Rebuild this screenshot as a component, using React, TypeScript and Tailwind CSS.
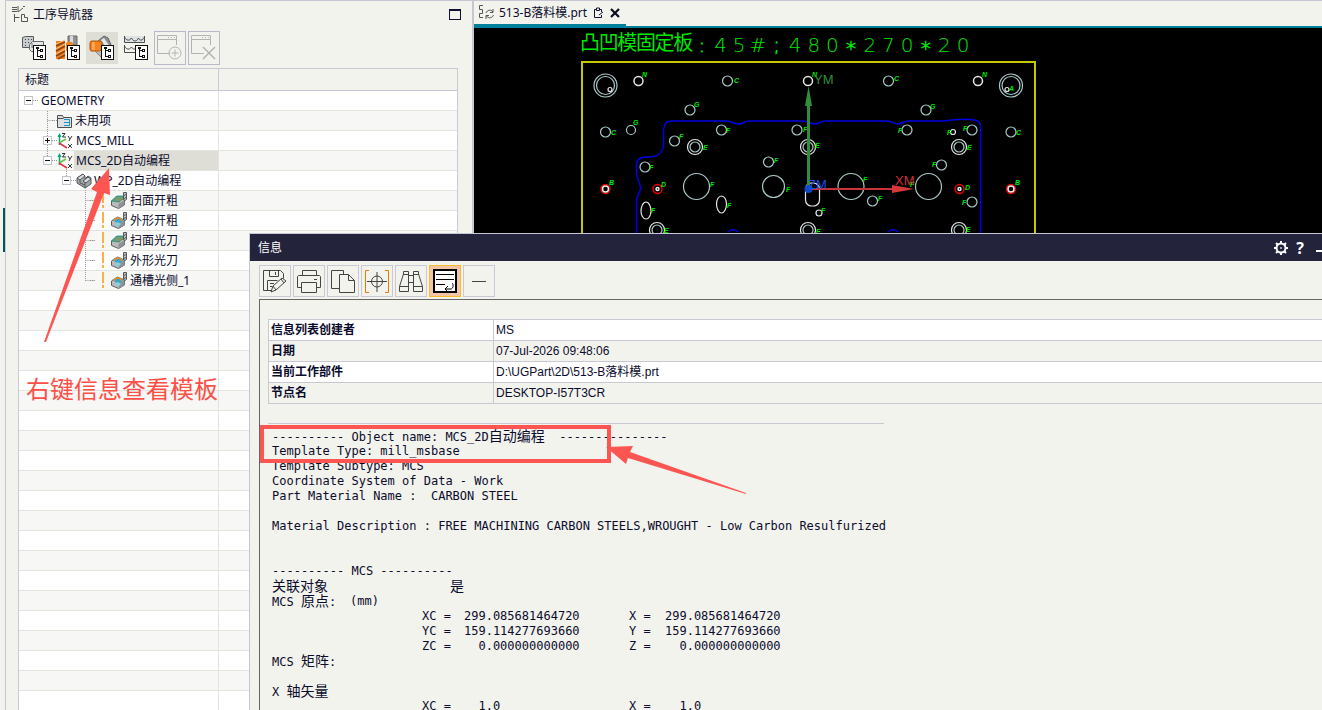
import { ReactNode } from 'react'

const yahei = "font-['Noto_Sans','Noto_Sans_CJK_SC',sans-serif]"

// ---------- navigator data ----------

type Node = {
  label: string
  icon: 'none' | 'folder' | 'mcs' | 'part' | 'face' | 'contour'
  depth: number
  toggle?: '+' | '-'
  selected?: boolean
}

const nodes: Node[] = [
  { label: 'GEOMETRY', icon: 'none', depth: 0, toggle: '-' },
  { label: '未用项', icon: 'folder', depth: 1 },
  { label: 'MCS_MILL', icon: 'mcs', depth: 1, toggle: '+' },
  { label: 'MCS_2D自动编程', icon: 'mcs', depth: 1, toggle: '-', selected: true },
  { label: 'WP_2D自动编程', icon: 'part', depth: 2, toggle: '-' },
  { label: '扫面开粗', icon: 'face', depth: 3 },
  { label: '外形开粗', icon: 'contour', depth: 3 },
  { label: '扫面光刀', icon: 'face', depth: 3 },
  { label: '外形光刀', icon: 'contour', depth: 3 },
  { label: '通槽光侧_1', icon: 'contour', depth: 3 },
]

const indents = ['pl-[5px]', 'pl-6', 'pl-[43px]', 'pl-[62px]']
const emptyRows = Array.from({ length: 22 })

// ---------- icons ----------

function TreeBadge({ x, y }: { x: number; y: number }) {
  return (
    <g transform={`translate(${x} ${y})`} fill="#fff" stroke="#111" shapeRendering="crispEdges">
      <rect x=".5" y=".5" width="12" height="14" />
      <path d="M4.5 3v8.5h3M4.5 5.5h3" fill="none" />
      <rect x="7.5" y="4.5" width="2" height="2" />
      <rect x="7.5" y="10.5" width="2" height="2" />
      <rect x="3.5" y="2.5" width="2" height="1" />
    </g>
  )
}

function ProgramIcon() {
  return (
    <svg width="26" height="26" viewBox="0 0 26 26">
      <path d="M1.500 2.500l3-1h8v10l-3 1h-8z" fill="#c9cccf" stroke="#55595c" />
      <path d="M4 4.500h1M7 4.500h1M10 4.500h1M4 7.500h1M7 7.500h1M4 10.500h1" stroke="#444" />
      <path d="M8.500 9.500l3-3h11v10h-12l-2-2z" fill="#e4e6e8" stroke="#66696c" />
      <path d="M11 12h2M11 8v5" stroke="#777" />
      <TreeBadge x={12} y={10} />
    </svg>
  )
}

function ToolIcon() {
  return (
    <svg width="26" height="26" viewBox="0 0 26 26">
      <path d="M13 1h9v9h-9z" fill="#8f9396" stroke="#66696b" />
      <path d="M15 1h3v9h-3z" fill="#d7dadb" />
      <path d="M11 8c3-2 5-1 7 0v8h-7z" fill="#f58220" />
      <path d="M1 6h9v18l-9 0z" fill="#f47d1c" />
      <path d="M1 11l9-4M1 16l9-5M1 21l9-5M3 24l7-4" stroke="#8a4410" strokeWidth="1.5" />
      <path d="M1 9l9-4M1 14l9-5M1 19l9-5" stroke="#ffc07d" />
      <TreeBadge x={12} y={10} />
    </svg>
  )
}

function GeometryIcon() {
  return (
    <svg width="26" height="26" viewBox="0 0 26 26">
      <path d="M9 6l6-5 4 2 4 9-6 5-7-2z" fill="#8d9092" stroke="#5d6062" />
      <path d="M15 3l6 9-3 2-6-9z" fill="#e4e6e7" />
      <path d="M5 15l8 8v-8z" fill="#b8babb" stroke="#888" />
      <path d="M2 6h8l3 1v8l-3 1H2L1 14V8z" fill="#f58220" stroke="#b55709" />
      <path d="M3 7h3v8H3z" fill="#ffa64d" />
      <TreeBadge x={12} y={10} />
    </svg>
  )
}

function MethodIcon() {
  return (
    <svg width="26" height="26" viewBox="0 0 26 26" fill="none" stroke="#4b4e50">
      <path d="M1.500 1v6.500h20V1M1.500 2c2 4 5 4 7 1 2 4 5 4 7 0 1 3 4 3 6-1" fill="#dfe1e2" />
      <path d="M1.500 10v7.500h11M1.500 11c2 4 5 4 7 1 1 2 3 3 5 1M14 11.500h8" />
      <TreeBadge x={12} y={10} />
    </svg>
  )
}

function WindowIcon({ kind }: { kind: 'add' | 'remove' }) {
  return (
    <svg width="28" height="28" viewBox="0 0 28 28" fill="none" stroke="#b3b3b3">
      <path d="M14 19.500H1.500V1.500h19V11M1.500 5.500h19" />
      <path d="M12 3.500h1M15 3.500h1M18 3.500h1" />
      {kind === 'add' ? (
        <>
          <circle cx="19" cy="19" r="6" />
          <path d="M15.500 19h7M19 15.500v7" />
        </>
      ) : (
        <path d="M13 13l12 12M25 13L13 25" strokeWidth="1.500" />
      )}
    </svg>
  )
}

function NavigatorIcon() {
  return (
    <svg width="17" height="17" viewBox="0 0 17 17" fill="none" stroke="#555">
      <path d="M0 1.500h5M0 3.500h5M0 5.500h5" />
      <path d="M6 0v6l5-4M11 .5h2" />
      <path d="M2.500 8v8M2.500 11.500h5M9.500 8.500h3v3h3v4h-6z" />
    </svg>
  )
}

function FolderIcon() {
  return (
    <svg width="16" height="16" viewBox="0 0 16 16" fill="none" stroke="#4c4f52">
      <path d="M.5 14.500v-12h5l1 2h8v10z" fill="#dedfe0" />
      <path d="M.5 5.500h6" />
      <path d="M7 6.500h5.500v6H7M7 9.500h5" stroke="#1696c4" />
    </svg>
  )
}

function McsIcon() {
  return (
    <svg width="17" height="18" viewBox="0 0 17 18" fill="none">
      <path d="M2.500 3v10" stroke="#00a67c" strokeWidth="1.500" />
      <path d="M.5 5l2-4 2 4z" fill="#00a67c" />
      <path d="M2 11l7-4" stroke="#65c443" strokeWidth="1.500" />
      <path d="M2 11l8 5" stroke="#e8304a" strokeWidth="1.500" />
      <path d="M5 1.500h3L5.500 5H9M11 4l2 3 2-3M13 7l-1 2M11 12l4 4M15 12l-4 4" stroke="#333" />
    </svg>
  )
}

function PartIcon() {
  return (
    <svg width="16" height="16" viewBox="0 0 16 16" stroke="#55585a" strokeLinejoin="round">
      <path d="M1 5l6-4 2 2v3l3-3 3 2v6l-6 4-8-5z" fill="#a4a7a9" />
      <path d="M1 5l6-4 2 2-5 4z" fill="#d7d9da" />
      <path d="M7 8l5-4 3 2-5 4z" fill="#d7d9da" />
      <path d="M4 7v3l5 2V9M9 12v3" fill="none" />
    </svg>
  )
}

function OperationIcon({ kind }: { kind: 'face' | 'contour' }) {
  return (
    <svg width="17" height="17" viewBox="0 0 17 17">
      <path d="M.5 9l6-4 7 3v5l-6 3.500-7-3z" fill="#b9bbbc" stroke="#5c5f61" />
      <path d="M7.500 12l6-4v5l-6 3.500z" fill="#8f9294" />
      {kind === 'face' ? (
        <>
          <path d="M.5 9l5-5h8l-5 6z" fill="#35a896" stroke="#2c7f72" strokeWidth=".7" />
          <path d="M3 8h8M5 6h7" stroke="#e08a2e" strokeWidth=".8" />
        </>
      ) : (
        <>
          <path d="M1 8l5-3 7 3-5 4z" fill="#37a6cc" />
          <path d="M3 9c1-4 7-4 8 0" fill="none" stroke="#f08a24" strokeWidth="1.500" />
          <path d="M4 12l3-2 3 2-3 3z" fill="#8cd0df" />
        </>
      )}
      <path d="M12.500.5h3v7l-1.500 1-1.500-1z" fill="#bfc1c3" stroke="#55585a" />
      <path d="M12 4l4-2M12 7l4-2" stroke="#55585a" />
    </svg>
  )
}

// ---------- tree ----------

function Toggle({ sign }: { sign: '+' | '-' }) {
  return (
    <button aria-label={sign === '+' ? 'expand' : 'collapse'} className="relative z-10 size-[9px] shrink-0 border border-[#c4c4cf] bg-white">
      <svg className="size-[7px]" viewBox="0 0 7 7" stroke="#111" shapeRendering="crispEdges">
        <path d={sign === '+' ? 'M1 3.500h5M3.500 1v5' : 'M1 3.500h5'} />
      </svg>
    </button>
  )
}

function NodeIcon({ icon }: { icon: Node['icon'] }) {
  if (icon === 'folder') return <FolderIcon />
  if (icon === 'mcs') return <McsIcon />
  if (icon === 'part') return <PartIcon />
  if (icon === 'face' || icon === 'contour') return <OperationIcon kind={icon} />
  return null
}

function TreeRow({ node }: { node: Node }) {
  return (
    <li className="grid h-5 grid-cols-[200px_1fr] border-b border-[#e4e4df] odd:bg-white even:bg-[#f7f7f5]">
      <div className={`flex min-w-0 items-center border-r border-[#e4e4df] ${indents[node.depth]}`}>
        {node.toggle ? <Toggle sign={node.toggle} /> : <span className="w-[9px] shrink-0" />}
        <span className="w-[5px] shrink-0 border-t border-dotted border-[#999]" />
        {node.depth === 3 && (
          <svg width="16" height="19" viewBox="0 0 16 19" className="shrink-0">
            <path d="M8 1v11M8 14v3" stroke="#f9b04b" strokeWidth="2" />
          </svg>
        )}
        <NodeIcon icon={node.icon} />
        <span className={`flex h-full items-center text-[12px] whitespace-nowrap ${node.icon === 'none' ? 'pl-[3px]' : 'pl-0.5'} ${node.selected ? 'flex-1 bg-[#deddd6]' : ''}`}>
          {node.label}
        </span>
      </div>
    </li>
  )
}

function ToolbarButton({ label, active, children }: { label: string; active?: boolean; children: ReactNode }) {
  return (
    <button aria-label={label} className={`grid h-8 w-8 place-items-center ${active ? 'bg-[#deddd6]' : ''}`}>
      {children}
    </button>
  )
}

function Navigator() {
  return (
    <section className="flex w-[467px] shrink-0 flex-col border-l border-[#c6c6d4]">
      <header className="flex h-7 shrink-0 items-center gap-1 border-t border-[#c6c6d4] pr-[11px] pl-1.5">
        <NavigatorIcon />
        <h1 className="flex-1 text-[12px]">工序导航器</h1>
        <button aria-label="maximize" className="h-[11px] w-3 border border-t-2 border-[#111133]" />
      </header>
      <div className="flex h-10 shrink-0 items-center gap-0.5 pl-3">
        <ToolbarButton label="program order"><ProgramIcon /></ToolbarButton>
        <ToolbarButton label="machine tool"><ToolIcon /></ToolbarButton>
        <ToolbarButton label="geometry" active><GeometryIcon /></ToolbarButton>
        <ToolbarButton label="method"><MethodIcon /></ToolbarButton>
        <button disabled aria-label="create" className="grid h-[34px] w-8 place-items-center border border-[#b9b9cb]"><WindowIcon kind="add" /></button>
        <button disabled aria-label="delete" className="grid h-[34px] w-8 place-items-center border border-[#b9b9cb]"><WindowIcon kind="remove" /></button>
      </div>
      <div className="relative mr-3.5 ml-3 flex-1 overflow-hidden border border-b-0 border-[#c9c9d5]">
        <div className="grid h-[22px] grid-cols-[200px_1fr] border-b border-[#c9c9d5]">
          <div className="flex items-center border-r border-[#c9c9d5] pl-1.5 text-[12px]">标题</div>
        </div>
        <ul>
          {nodes.map((n) => <TreeRow key={n.label} node={n} />)}
          {emptyRows.map((_, i) => (
            <li key={i} className="grid h-5 grid-cols-[200px_1fr] border-b border-[#e4e4df] odd:bg-white even:bg-[#f7f7f5]">
              <div className="border-r border-[#e4e4df]" />
            </li>
          ))}
        </ul>
        {/* dotted connectors between parents and children */}
        <svg className="pointer-events-none absolute top-0 left-0" width="100" height="220" stroke="#999" strokeDasharray="1 1" fill="none">
          <path d="M28.500 42v46M28.500 51.500h8M47.500 100v9M66.500 121v91M66.500 131.500h9M66.500 151.500h9M66.500 171.500h9M66.500 191.500h9M66.500 211.500h9" />
        </svg>
      </div>
    </section>
  )
}

// ---------- drawing ----------

const holes = [
  [727.5, 81, 5], [888.5, 81, 5],
  [690, 110, 5], [926, 110, 5], [605.5, 132, 5], [631, 130, 4.5], [1011, 132, 5],
  [721.5, 130, 5], [674.5, 141, 5], [797, 130, 5], [907, 130, 5], [972, 130, 5],
  [645, 167, 5], [768.5, 162, 5], [941.5, 165, 5], [872.5, 201, 5], [972, 202, 5],
  [696.5, 186.5, 13], [773.5, 186.5, 11], [851, 186.5, 13], [928.5, 186.5, 13],
]
const bushings = [[695, 147], [808, 147], [959, 147], [657, 230], [808, 230], [959, 230]]
const pins = [[605.5, 189], [657.5, 189], [959.5, 189], [1011, 189]]

const marks: [string, number, number][] = [
  ['N', 642, 77], ['C', 734, 83], ['N', 812, 77], ['C', 894, 81], ['N', 982, 77],
  ['G', 694, 107], ['G', 930, 109], ['C', 611, 135], ['G', 633, 125], ['C', 1016, 135],
  ['F', 726, 133], ['F', 679, 139], ['F', 803, 132], ['F', 898, 133], ['F', 947, 135], ['F', 963, 131],
  ['E', 703, 150], ['E', 815, 148], ['E', 967, 150], ['F', 649, 170], ['F', 774, 163], ['F', 932, 167],
  ['F', 710, 187], ['F', 786, 192], ['F', 863, 182], ['F', 910, 187], ['B', 609, 185], ['D', 661, 187],
  ['D', 965, 190], ['B', 1015, 185], ['F', 651, 213], ['F', 727, 208], ['F', 878, 201], ['F', 821, 213],
  ['F', 962, 205], ['E', 664, 233], ['E', 816, 234], ['E', 966, 232], ['A', 1009, 91],
]

const caption = [...'凸凹模固定板:45#;480*270*20']

function Drawing() {
  return (
    <svg width="848" height="206" viewBox="474 28 848 206" fill="none" className="block">
      {/* stroke-font caption, one glyph per cell */}
      <text fill="#00e800" fontSize="20" fontWeight="300" textAnchor="middle" fontFamily="'DejaVu Sans Light', 'DejaVu Sans', 'Noto Sans CJK SC', sans-serif">
        {caption.map((c, i) => (
          <tspan
            key={i}
            x={590 + i * 18.65}
            y={c === '*' ? 55 : i < 6 ? 50 : 52}
            fontWeight={i < 6 ? 400 : c === '*' || c === ':' || c === ';' ? 700 : 200}
          >
            {c}
          </tspan>
        ))}
      </text>
      <path d="M582 240V62h453v178" stroke="#c8c800" strokeWidth="2" />
      <path
        d="M636.5 240v-40c0-5 5-8 4-13s-4-10-4-15v-8c1-6 5-7 12-7 10 0 14-4 15-12v-15c1-6 2-9 8-9h55c5 0 7 3 12 3s6-3 11-3h53c5 0 7 3 12 3s6-3 11-3h62c5 0 6 3 10 3s7-3 11-3h35c15-2 25-2 31-1 5 1 6 3 6 8V240M728 232c3-3 7-3 10 0M888 232c3-3 7-3 10 0"
        stroke="#0000e6"
        strokeWidth="1.5"
      />
      <g stroke="#a9c8c8" strokeWidth="1.2">
        {holes.map(([x, y, r]) => <circle key={`${x},${y}`} cx={x} cy={y} r={r} />)}
      </g>
      <g stroke="#e6e6e6" strokeWidth="1.2">
        {[605.5, 1011].map((x) => (
          <g key={x} stroke="#a9c8c8">
            <circle cx={x} cy="85.5" r="11.5" />
            <circle cx={x} cy="85.5" r="9" />
          </g>
        ))}
        {[638.5, 808, 978].map((x) => <circle key={x} cx={x} cy="81" r="4.500" strokeWidth="1.500" />)}
        <circle cx="610" cy="89.5" r="2" />
        <circle cx="1007" cy="89.5" r="2" />
        <circle cx="953" cy="132" r="2.5" />
        <circle cx="819" cy="213" r="3" />
        {bushings.map(([x, y]) => (
          <g key={`${x},${y}`}>
            <circle cx={x} cy={y} r="7.5" />
            <circle cx={x} cy={y} r="5" stroke="#a9c8c8" />
          </g>
        ))}
        <path d="M646 202c3 0 5 5 5 9s-2 8-5 8-5-4-5-8 2-9 5-9zM721.5 196c3 0 5 4 5 8s-2 9-5 9-5-5-5-9 2-8 5-8z" />
        <rect x="805.5" y="183" width="14" height="23" rx="6" />
      </g>
      {pins.map(([x, y]) => (
        <g key={x}>
          <circle cx={x} cy={y} r="4.5" stroke="#e60000" strokeWidth="1.5" />
          <circle cx={x} cy={y} r={x > 650 && x < 1000 ? 1.5 : 3} stroke="#eee" strokeWidth="1.5" />
        </g>
      ))}
      <g fill="#00e800" fontSize="7" fontWeight="bold" fontStyle="italic" fontFamily="'Liberation Sans', sans-serif">
        {marks.map(([t, x, y]) => <text key={`${x},${y}`} x={x} y={y}>{t}</text>)}
      </g>
      <path d="M808.500 189V104" stroke="#2f8f3a" strokeWidth="3" />
      <path d="M805 106l3.500-20 3.500 20z" fill="#2f8f3a" />
      <path d="M809 189h84" stroke="#c8323a" strokeWidth="2" />
      <path d="M892 185l22 4-22 4z" fill="#d8383c" />
      <circle cx="808.500" cy="189" r="4" fill="#0f48c8" />
      <g fontSize="13" fontFamily="'Liberation Sans', sans-serif">
        <text x="814" y="84" fill="#2f8f3a">YM</text>
        <text x="895" y="185" fill="#c8323a">XM</text>
        <text x="808" y="189" fill="#1250e0">ZM</text>
      </g>
    </svg>
  )
}

function Viewport() {
  return (
    <main className="flex min-w-0 flex-1 flex-col overflow-hidden border-l-2 border-[#c6c6d4] bg-black">
      <div className="flex h-7 shrink-0 items-start border-t border-b-2 border-t-[#c6c6d4] border-b-[#00809a] bg-[#f3f3ee]">
        <div className="flex h-[25px] items-center gap-1 border-b-2 border-[#00809a] pr-1.5 pl-1">
          <svg width="17" height="17" viewBox="0 0 17 17" fill="none" stroke="#555">
            <path d="M5 1.500H1.500v4h3v4h-3v4H5" />
            <path d="M8 9c1-3 5-4 7-1M15 5v3.500h-3M15.500 11c-1 3-5 4-7 1M8 15v-3.500h3" />
          </svg>
          <span className="text-[12px] whitespace-nowrap">513-B落料模.prt</span>
          <svg width="11" height="12" viewBox="0 0 11 12" fill="none" stroke="#111133" className="ml-0.5">
            <path d="M3 2.500H1.500v8h7V8M7 2.500h1.500V5M3.500 1v2.500h3V1zM6 8l4-3" />
          </svg>
          <button aria-label="close tab" className="ml-0.5">
            <svg width="10" height="10" viewBox="0 0 10 10" stroke="#0b0b22" strokeWidth="2.2"><path d="M1 1l8 8M9 1L1 9" /></svg>
          </button>
        </div>
      </div>
      <Drawing />
    </main>
  )
}

// ---------- information window ----------

const facts = [
  ['信息列表创建者', 'MS'],
  ['日期', '07-Jul-2026 09:48:06'],
  ['当前工作部件', 'D:\\UGPart\\2D\\513-B落料模.prt'],
  ['节点名', 'DESKTOP-I57T3CR'],
]

const tools: { label: string; art: ReactNode; active?: boolean }[] = [
  {
    label: 'save',
    art: (
      <>
        <path d="M10 22.500H1.500v-20h17l3 3v5M7.500 3v5.500h9V3M13.500 4v3M5.500 22V12.500h10M8 15.500h4M8 18.500h2" />
        <path d="M9 24l2-6 9-8 4 3-10 9zM11 18l3 4M19 11l3 4" />
      </>
    ),
  },
  { label: 'print', art: <path d="M6.5 7V2.500h14V7M5.500 19.500h-4V8.500l1-1h21l1 1v11h-4M5.500 14.500h15v10h-15zM18 11.500h3" /> },
  { label: 'copy', art: <path d="M9 20.500H1.500v-18h12V6M9.500 6.500h9l6 6v12h-15zM18.500 6.500v6h6" /> },
  {
    label: 'locate',
    art: (
      <>
        <path d="M5 2.500H1.500v22H5M21 2.500h3.500v22H21" stroke="#f07800" />
        <circle cx="13" cy="13.500" r="5.500" />
        <path d="M3 13.500h20M13 4v20" />
      </>
    ),
  },
  { label: 'find', art: <path d="M5.500 6V3.500h5v20h-9v-5l4-12.500zM15.500 3.500h5V6l4 12.500v5h-9zM5.500 6.500h5M15.500 6.500h5M1.500 18.500h9M15.500 18.500h9M10.500 7.500h5M10.500 14.500h5" /> },
  {
    label: 'wrap',
    active: true,
    art: (
      <>
        <rect x="2" y="2" width="22" height="22" fill="#fff" stroke="#000" strokeWidth="2" />
        <path d="M4 6.500h18M4 11.500h18M4 16.500h9M20 15c2 1 1 6-1 6h-5M16 18l-3 3 3 3" stroke="#000" />
      </>
    ),
  },
  { label: 'collapse', art: <path d="M6 13.500h14" /> },
]

// Chinese glyphs are set a little larger than the latin ones in listings
function Han({ children }: { children: ReactNode }) {
  return <span className="text-[14px]">{children}</span>
}

function Coordinates({ rows }: { rows: [string, string][] }) {
  return (
    <>
      {rows.map(([axis, value]) => (
        <div key={axis} className="grid grid-cols-[28px_130px_49px_28px_122px] pl-[150px]">
          <span>{axis}C =</span>
          <span className="pl-[14px]">{value}</span>
          <span />
          <span>{axis} =</span>
          <span className="pl-2">{value}</span>
        </div>
      ))}
    </>
  )
}

function InfoWindow() {
  return (
    <section className="absolute top-[233px] right-0 bottom-0 left-[249px] flex flex-col overflow-hidden border-t border-l border-[#c6c6d4] bg-[#f3f3ee]">
      <header className="flex h-[27px] shrink-0 items-center gap-2 bg-[#23233c] pl-2 text-white">
        <h2 className="flex-1 text-[12px]">信息</h2>
        <button aria-label="settings">
          <svg width="14" height="14" viewBox="0 0 14 14" fill="none" stroke="#fff" strokeWidth="2">
            <circle cx="7" cy="7" r="4.500" />
            <path d="M7 0v2M7 12v2M0 7h2M12 7h2M2 2l1.500 1.500M10.500 10.500L12 12M12 2l-1.500 1.500M3.500 10.500L2 12" />
            <circle cx="7" cy="7" r=".5" strokeWidth="1" />
          </svg>
        </button>
        <button aria-label="help" className="text-[16px] leading-none font-bold">?</button>
        <button aria-label="minimize" className="ml-1 h-2 w-1.5 border-b-2 border-white" />
      </header>
      <div className="flex shrink-0 gap-0.5 pt-1 pb-0.5 pl-[9px]">
        {tools.map((t) => (
          <button key={t.label} aria-label={t.label} className={`grid size-8 place-items-center border ${t.active ? 'border-[#fbb92c] bg-[#f3c6a5]' : 'border-[#c9c9d5]'}`}>
            <svg width="26" height="26" viewBox="0 0 26 26" fill="none" stroke="#444">{t.art}</svg>
          </button>
        ))}
      </div>
      <div className="ml-[9px] flex-1 overflow-hidden border-t border-l border-[#666]">
        <table className="mt-[19px] ml-2 w-full border-collapse text-[12px]">
          <tbody>
            {facts.map(([name, value]) => (
              <tr key={name} className="h-[21px] border border-[#c9c9d5] odd:bg-white">
                <th scope="row" className="w-[225px] border-r border-[#c9c9d5] p-0 pl-0.5 text-left leading-5 font-bold">{name}</th>
                <td className="p-0 pl-0.5 font-['Liberation_Sans','Noto_Sans_CJK_SC',sans-serif] leading-5">{value}</td>
              </tr>
            ))}
          </tbody>
        </table>
        <hr className="mt-[19px] ml-2 w-[616px] border-[#c9c9d5]" />
        <div className="mt-[5px] ml-3 font-['DejaVu_Sans_Mono','Noto_Sans_CJK_SC',monospace] text-[12px] leading-[15px] whitespace-pre">
          <p className="h-[15px]">---------- Object name: MCS_2D<Han>自动编程</Han>  ---------------</p>
          <p className="h-[15px]">Template Type: mill_msbase</p>
          <p className="h-[15px]">Template Subtype: MCS</p>
          <p className="h-[15px]">Coordinate System of Data - Work</p>
          <p className="h-[15px]">Part Material Name :  CARBON STEEL</p>
          <p className="mt-[15px] h-[15px]">Material Description : FREE MACHINING CARBON STEELS,WROUGHT - Low Carbon Resulfurized</p>
          <p className="mt-[30px] h-[15px]">---------- MCS ----------</p>
          <div className="grid h-[15px] grid-cols-[178px_1fr]"><Han>关联对象</Han><Han>是</Han></div>
          <div className="grid h-[15px] grid-cols-[78px_1fr]"><span>MCS <Han>原点</Han>:</span><span>(mm)</span></div>
          <Coordinates rows={[['X', '299.085681464720'], ['Y', '159.114277693660'], ['Z', '  0.000000000000']]} />
          <p className="h-[15px]">MCS <Han>矩阵</Han>:</p>
          <p className="mt-[15px] h-[15px]">X <Han>轴矢量</Han></p>
          <Coordinates rows={[['X', '  1.0']]} />
        </div>
      </div>
    </section>
  )
}

// red callouts drawn over the windows
function Callouts() {
  return (
    <div className="pointer-events-none absolute inset-0 overflow-hidden">
      <svg className="absolute top-0 left-0" width="760" height="510" fill="#fd5551">
        <path d="M44 342l53-150-6-3 18-21 1 27-6-2-58 149z" />
        <path d="M746 494l-118-36-2 6-20-17 27-1-3 6 116 41z" />
        <path d="M262 427h347v34H262z" fill="none" stroke="#fd5551" strokeWidth="4" />
      </svg>
      <p className="absolute top-[373px] left-[26px] text-[24px] leading-8 text-[#fd4f45]">右键信息查看模板</p>
    </div>
  )
}

export default function App() {
  return (
    <div className={`relative h-screen overflow-hidden bg-[#f3f3ee] text-[#0b0b2c] ${yahei}`}>
      <div className="flex h-full">
        <aside className="w-[5px] shrink-0 pt-[208px] pl-[3px]">
          <div className="h-11 w-[3px] bg-[#00565c]" />
        </aside>
        <Navigator />
        <Viewport />
      </div>
      <InfoWindow />
      <Callouts />
    </div>
  )
}
